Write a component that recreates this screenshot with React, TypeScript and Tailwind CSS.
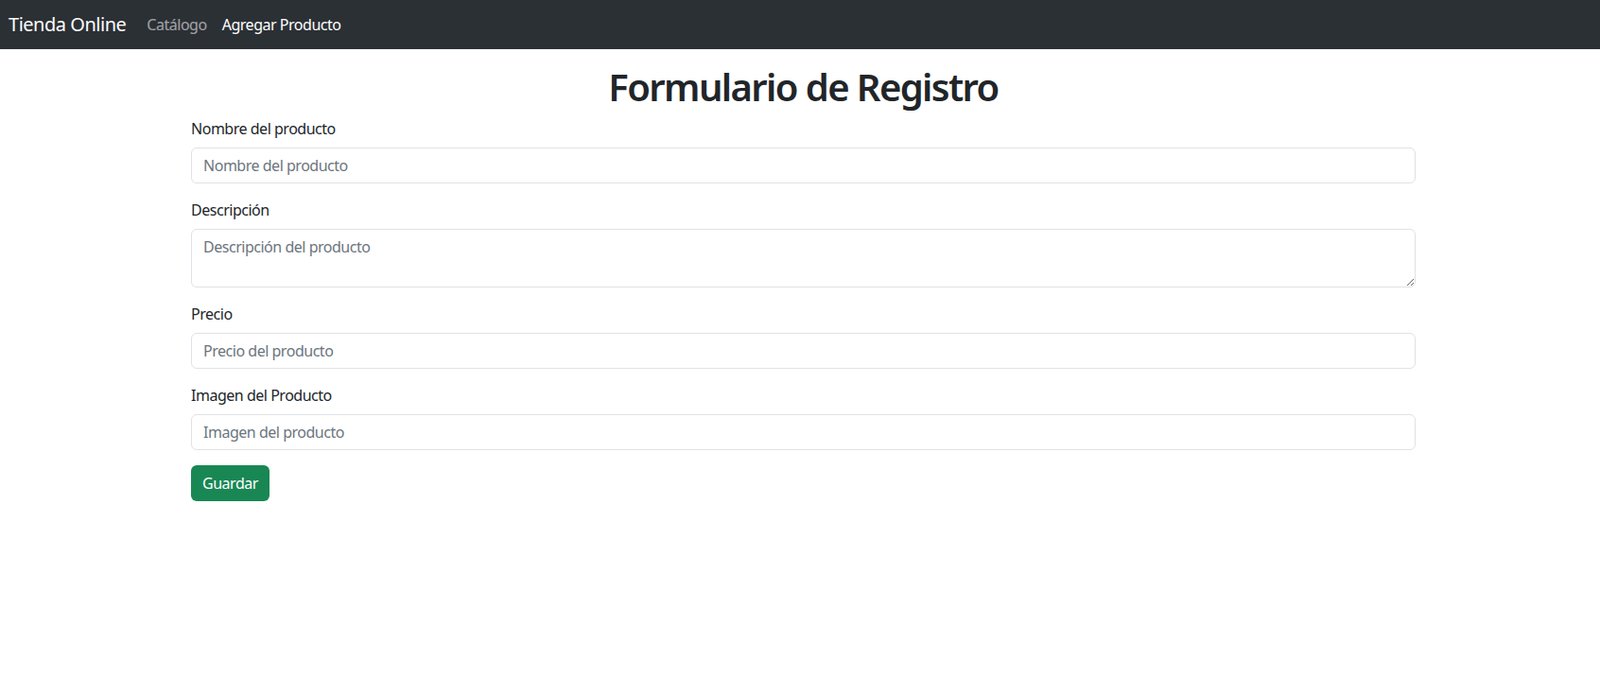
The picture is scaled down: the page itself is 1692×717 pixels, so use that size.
import React, { useState } from 'react';

const font = { fontFamily: '"Noto Sans", "Open Sans", sans-serif' };

const Field: React.FC<{
    label: string;
    placeholder: string;
    value: string;
    onChange: (v: string) => void;
    textarea?: boolean;
}> = ({ label, placeholder, value, onChange, textarea }) => (
    <div className="mb-4">
        <label className="block mb-2 text-[16px] leading-6 text-[#212529]">{label}</label>
        {textarea ? (
            <textarea
                rows={2}
                value={value}
                onChange={(e) => onChange(e.target.value)}
                placeholder={placeholder}
                className="block w-full h-[62px] px-3 py-1.5 text-[16px] leading-6 tracking-[-0.03em] text-[#212529] bg-white border border-[#dee2e6] rounded-md placeholder:text-[#6c757d] focus:outline-none"
            />
        ) : (
            <input
                type="text"
                value={value}
                onChange={(e) => onChange(e.target.value)}
                placeholder={placeholder}
                className="block w-full h-[38px] px-3 py-1.5 text-[16px] leading-6 tracking-[-0.03em] text-[#212529] bg-white border border-[#dee2e6] rounded-md placeholder:text-[#6c757d] focus:outline-none"
            />
        )}
    </div>
);

const App: React.FC = () => {
    const [nombre, setNombre] = useState('');
    const [descripcion, setDescripcion] = useState('');
    const [precio, setPrecio] = useState('');
    const [imagen, setImagen] = useState('');

    return (
        <div className="min-h-screen bg-white tracking-[-0.03em]" style={font}>
            <nav className="h-[52px] bg-[#2b3035] flex items-center px-[9px]">
                <span className="text-[20px] leading-[30px] text-white mr-[22px]">Tienda Online</span>
                <a className="text-[16px] leading-6 text-white/55 mr-[16px]" href="#">Catálogo</a>
                <a className="text-[16px] leading-6 text-white" href="#">Agregar Producto</a>
            </nav>
            <div className="pl-[202px]">
                <div className="w-[1295px]">
                    <h1 className="mt-4 mb-2 text-[40px] leading-[48px] font-semibold tracking-[-0.04em] text-center text-[#212529]">
                        Formulario de Registro
                    </h1>
                    <form onSubmit={(e) => e.preventDefault()}>
                        <Field label="Nombre del producto" placeholder="Nombre del producto" value={nombre} onChange={setNombre} />
                        <Field label="Descripción" placeholder="Descripción del producto" value={descripcion} onChange={setDescripcion} textarea />
                        <Field label="Precio" placeholder="Precio del producto" value={precio} onChange={setPrecio} />
                        <Field label="Imagen del Producto" placeholder="Imagen del producto" value={imagen} onChange={setImagen} />
                        <button
                            type="submit"
                            className="h-[38px] px-3 text-[16px] leading-6 tracking-[-0.03em] text-white bg-[#198754] rounded-md"
                        >
                            Guardar
                        </button>
                    </form>
                </div>
            </div>
        </div>
    );
};

export default App;
